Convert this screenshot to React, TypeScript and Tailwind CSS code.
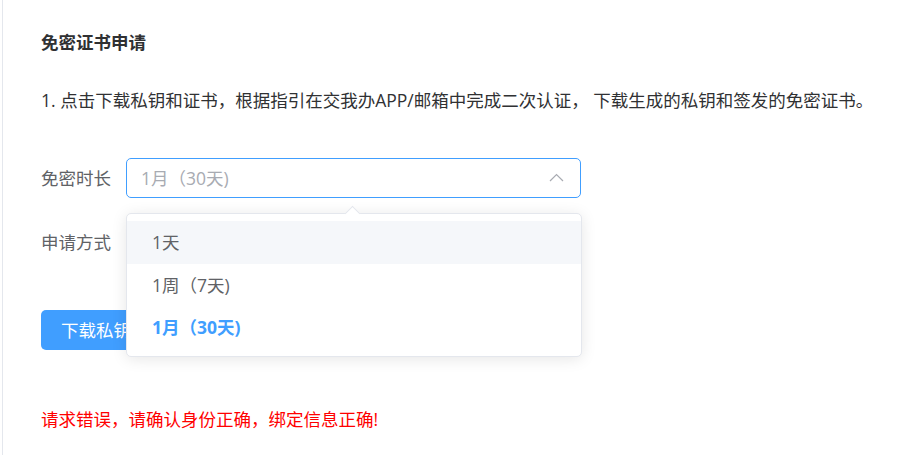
import React from "react";

const options = [
  { label: "1天", value: "1d" },
  { label: "1周（7天)", value: "7d" },
  { label: "1月（30天)", value: "30d" },
];

export default function App() {
  const selected = "30d";
  const hovered = "1d";

  return (
    <div
      className="relative w-[901px] h-[455px] bg-white overflow-hidden"
      style={{ fontFamily: '"Open Sans", "Noto Sans CJK SC", sans-serif' }}
    >
      <div className="ml-[2px] h-full border-l border-[#e4e7ed] pl-[38px] pt-[30px]">
        {/* Title */}
        <h2 className="text-[17.5px] leading-[24px] font-bold text-[#303133]">免密证书申请</h2>

        {/* Step description */}
        <p className="mt-[34px] text-[17.5px] leading-[24px] text-[#303133]">
          1. 点击下载私钥和证书，根据指引在交我办APP/邮箱中完成二次认证， 下载生成的私钥和签发的免密证书。
        </p>

        {/* Form */}
        <div className="mt-[46px]">
          <div className="flex items-center h-[40px]">
            <label className="w-[85px] text-[17.5px] text-[#606266]">免密时长</label>
            <div className="relative w-[455px] h-[40px] rounded-[5px] border border-[#409eff] flex items-center pl-[14px] pr-[16px]">
              <span className="flex-1 text-[17.5px] text-[#a8abb2]">1月（30天)</span>
              <svg width="15" height="9" viewBox="0 0 15 9" fill="none" className="mb-[1px]">
                <polyline points="1,8 7.5,1.5 14,8" stroke="#a8abb2" strokeWidth="1.2" />
              </svg>

              {/* Dropdown */}
              <div className="absolute left-[-1px] top-[54px] w-[456px] rounded-[5px] border border-[#e4e7ed] bg-white shadow-[0_2px_15px_rgba(0,0,0,0.1)] py-[7px] z-10">
                <div className="absolute top-[-6px] left-[220px] w-[11px] h-[11px] rotate-45 border-t border-l border-[#e4e7ed] bg-white" />
                {options.map(o => (
                  <div
                    key={o.value}
                    className={`relative h-[42.5px] flex items-center pl-[25px] text-[17.5px] ${
                      o.value === hovered ? "bg-[#f5f7fa]" : ""
                    } ${o.value === selected ? "text-[#409eff] font-bold" : "text-[#606266]"}`}
                  >
                    {o.label}
                  </div>
                ))}
              </div>
            </div>
          </div>

          <div className="flex items-center h-[40px] mt-[24px]">
            <label className="w-[85px] text-[17.5px] text-[#606266]">申请方式</label>
          </div>

          <button
            type="button"
            className="mt-[48px] h-[40px] px-[20px] rounded-[5px] bg-[#409eff] text-white text-[17.5px]"
          >
            下载私钥和证书
          </button>
        </div>

        <p className="mt-[57px] text-[17.5px] leading-[24px] text-[#ff0000]">
          请求错误，请确认身份正确，绑定信息正确!
        </p>
      </div>
    </div>
  );
}
